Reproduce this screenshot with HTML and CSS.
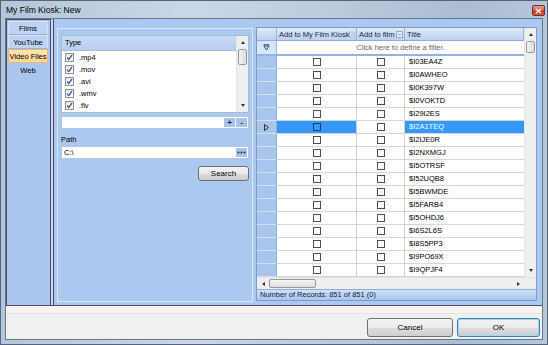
FILE: index.html
```html
<!DOCTYPE html>
<html>
<head>
  <link rel="stylesheet" href="styles.css">
</head>
<body>
<div class="window">
  <div class="titlebar">
    <span class="title">My Film Kiosk: New</span>
    <span class="close"><svg width="7" height="6" viewBox="0 0 7 6"><path d="M1 1 L6 5 M6 1 L1 5" stroke="#fff" stroke-width="1.4"/></svg></span>
  </div>

  <div class="client">
    <div class="main">
      <div class="tabs">
        <div class="tab">Films</div>
        <div class="tab">YouTube</div>
        <div class="tab active">Video Files</div>
        <div class="tab flat">Web</div>
      </div>
      <div class="splitter"></div>

      <div class="middle">
        <div class="group">
          <div class="typelist">
            <div class="tl-main">
              <div class="tl-head">Type</div>
              <div class="tl-item"><span class="cb"><svg width="7" height="7" viewBox="0 0 7 7"><path d="M1 3.6 L2.8 5.6 L6 1" fill="none" stroke="#23459c" stroke-width="1.2"/></svg></span>.mp4</div>
              <div class="tl-item"><span class="cb"><svg width="7" height="7" viewBox="0 0 7 7"><path d="M1 3.6 L2.8 5.6 L6 1" fill="none" stroke="#23459c" stroke-width="1.2"/></svg></span>.mov</div>
              <div class="tl-item"><span class="cb"><svg width="7" height="7" viewBox="0 0 7 7"><path d="M1 3.6 L2.8 5.6 L6 1" fill="none" stroke="#23459c" stroke-width="1.2"/></svg></span>.avi</div>
              <div class="tl-item"><span class="cb"><svg width="7" height="7" viewBox="0 0 7 7"><path d="M1 3.6 L2.8 5.6 L6 1" fill="none" stroke="#23459c" stroke-width="1.2"/></svg></span>.wmv</div>
              <div class="tl-item"><span class="cb"><svg width="7" height="7" viewBox="0 0 7 7"><path d="M1 3.6 L2.8 5.6 L6 1" fill="none" stroke="#23459c" stroke-width="1.2"/></svg></span>.flv</div>
            </div>
            <div class="vscroll">
              <div class="arrow up"></div>
              <div class="thumb list-thumb"></div>
              <div class="track"></div>
              <div class="arrow down"></div>
            </div>
          </div>

          <div class="addrow">
            <div class="textbox"></div>
            <div class="sqbtn">+</div>
            <div class="sqbtn">-</div>
          </div>

          <div class="label">Path</div>
          <div class="pathrow">
            <div class="textbox">C:\</div>
            <div class="sqbtn"><svg width="9" height="3" viewBox="0 0 9 3"><circle cx="1.5" cy="1.5" r="1" fill="#1c3560"/><circle cx="4.5" cy="1.5" r="1" fill="#1c3560"/><circle cx="7.5" cy="1.5" r="1" fill="#1c3560"/></svg></div>
          </div>

          <div class="search">Search</div>
        </div>
      </div>

      <div class="gridpane">
        <div class="grid">
          <div class="gbody">
            <div class="table">
              <div class="ghead">
                <div class="hc"></div>
                <div class="hc">Add to My Film Kiosk<svg width="7" height="7" viewBox="0 0 7 7"><rect x=".5" y=".5" width="6" height="6" fill="#e6eefa" stroke="#93acd3"/><path d="M2 2.8 L3.5 4.3 L5 2.8" stroke="#7d92b3" fill="none"/></svg></div>
                <div class="hc">Add to film<svg width="7" height="7" viewBox="0 0 7 7"><rect x=".5" y=".5" width="6" height="6" fill="#e6eefa" stroke="#93acd3"/><path d="M2 2.8 L3.5 4.3 L5 2.8" stroke="#7d92b3" fill="none"/></svg></div>
                <div class="hc">Title</div>
              </div>
              <div class="gfilter">
                <div class="frh"><svg width="7" height="7" viewBox="0 0 7 7"><path d="M0.5 0.8 H6.5 M1 2 L3.5 6 L6 2 Z" fill="none" stroke="#1f3d6b" stroke-width="0.9"/></svg></div>
                <div class="ftext">Click here to define a filter.</div>
              </div>
              <div class="grow"><div class="rh"></div><div class="c"><span class="gcb"></span></div><div class="c"><span class="gcb"></span></div><div class="t">$I03EA4Z</div></div>
              <div class="grow"><div class="rh"></div><div class="c"><span class="gcb"></span></div><div class="c"><span class="gcb"></span></div><div class="t">$I0AWHEO</div></div>
              <div class="grow"><div class="rh"></div><div class="c"><span class="gcb"></span></div><div class="c"><span class="gcb"></span></div><div class="t">$I0K397W</div></div>
              <div class="grow"><div class="rh"></div><div class="c"><span class="gcb"></span></div><div class="c"><span class="gcb"></span></div><div class="t">$I0VOKTD</div></div>
              <div class="grow"><div class="rh"></div><div class="c"><span class="gcb"></span></div><div class="c"><span class="gcb"></span></div><div class="t">$I29I2ES</div></div>
              <div class="grow sel"><div class="rh"><svg width="5" height="7" viewBox="0 0 5 7"><path d="M0.5 0.5 L4.5 3.5 L0.5 6.5 Z" fill="none" stroke="#222" stroke-width="0.9"/></svg></div><div class="c c1"><span class="gcb"></span></div><div class="c"><span class="gcb"></span></div><div class="t">$I2A1TEQ</div></div>
              <div class="grow"><div class="rh"></div><div class="c"><span class="gcb"></span></div><div class="c"><span class="gcb"></span></div><div class="t">$I2IJE0R</div></div>
              <div class="grow"><div class="rh"></div><div class="c"><span class="gcb"></span></div><div class="c"><span class="gcb"></span></div><div class="t">$I2NXMGJ</div></div>
              <div class="grow"><div class="rh"></div><div class="c"><span class="gcb"></span></div><div class="c"><span class="gcb"></span></div><div class="t">$I5OTRSF</div></div>
              <div class="grow"><div class="rh"></div><div class="c"><span class="gcb"></span></div><div class="c"><span class="gcb"></span></div><div class="t">$I52UQB8</div></div>
              <div class="grow"><div class="rh"></div><div class="c"><span class="gcb"></span></div><div class="c"><span class="gcb"></span></div><div class="t">$I5BWMDE</div></div>
              <div class="grow"><div class="rh"></div><div class="c"><span class="gcb"></span></div><div class="c"><span class="gcb"></span></div><div class="t">$I5FARB4</div></div>
              <div class="grow"><div class="rh"></div><div class="c"><span class="gcb"></span></div><div class="c"><span class="gcb"></span></div><div class="t">$I5OHDJ6</div></div>
              <div class="grow"><div class="rh"></div><div class="c"><span class="gcb"></span></div><div class="c"><span class="gcb"></span></div><div class="t">$I6S2L6S</div></div>
              <div class="grow"><div class="rh"></div><div class="c"><span class="gcb"></span></div><div class="c"><span class="gcb"></span></div><div class="t">$I8S5PP3</div></div>
              <div class="grow"><div class="rh"></div><div class="c"><span class="gcb"></span></div><div class="c"><span class="gcb"></span></div><div class="t">$I9PO69X</div></div>
              <div class="grow"><div class="rh"></div><div class="c"><span class="gcb"></span></div><div class="c"><span class="gcb"></span></div><div class="t">$I9QPJF4</div></div>
            </div>
            <div class="vscroll">
              <div class="arrow up"></div>
              <div class="thumb grid-thumb"></div>
              <div class="track"></div>
              <div class="arrow down"></div>
            </div>
          </div>
          <div class="hscroll">
            <div class="harrow left"></div>
            <div class="hthumb"></div>
            <div class="htrack"></div>
            <div class="harrow right"></div>
            <div class="corner"></div>
          </div>
          <div class="status">Number of Records: 851 of 851 (0)</div>
        </div>
      </div>
    </div>

    <div class="footer">
      <div class="btn">Cancel</div>
      <div class="btn ok">OK</div>
    </div>
  </div>
</div>
</body>
</html>
```

FILE: styles.css
```css
* {
  box-sizing: border-box;
}
body {
  margin: 0;
  width: 548px;
  height: 345px;
  overflow: hidden;
  font-family: "Liberation Sans", Arial, sans-serif;
  font-size: 7.5px;
  color: #000;
}
.window {
  width: 548px;
  height: 345px;
  border: 1px solid #56657a;
  background: linear-gradient(to right, #b4c6da, #c9d7e7 35%, #bccbdd 60%, #aabdd3 85%, #b6c7da);
  display: flex;
  flex-direction: column;
}
.titlebar {
  height: 17px;
  display: flex;
  justify-content: space-between;
  padding: 0 2px 0 5px;
}
.title {
  font-size: 8.5px;
  line-height: 18px;
}
.close {
  width: 13px;
  height: 11px;
  margin-top: 4px;
  border: 1px solid #7a2a22;
  border-radius: 2px;
  background: linear-gradient(#eba195, #d45a45 50%, #c1301c 51%, #d9623f);
  display: flex;
  align-items: center;
  justify-content: center;
}
.client {
  flex: 1;
  margin: 0 4px 4px 4px;
  border: 1px solid #6b7787;
  background: #f0f0f0;
  display: flex;
  flex-direction: column;
}
.main {
  height: 287px;
  display: flex;
  border-bottom: 1px solid #4b4a73;
}

/* left tabs */
.tabs {
  width: 45px;
  background: #a9c6ec;
  border: 1px solid #4b4a73;
  border-bottom: none;
  padding: 1px 2px 0 1px;
}
.tab {
  height: 14px;
  line-height: 13px;
  text-align: center;
  background: #bcd3f3;
  border: 1px solid #d3e2f7;
  border-bottom-color: #97b4df;
}
.tab.active {
  background: linear-gradient(#fde3b4, #fbd597);
  border-color: #e9b971;
}
.tab.flat {
  background: none;
  border-color: transparent;
}
.splitter {
  width: 2px;
  background: #d0d8e6;
}
.middle {
  width: 203px;
  background: #abc8ee;
  border-left: 1px solid #4b4a73;
  padding: 9px 3px 3px 3px;
}
.group {
  height: 100%;
  border: 1px solid #dbe7f8;
  padding: 6px 3px 0 3px;
  display: flex;
  flex-direction: column;
}

/* type list */
.typelist {
  height: 78px;
  display: flex;
  border: 1px solid #9fb9df;
  background: #fff;
}
.tl-main {
  flex: 1;
}
.tl-head {
  height: 15px;
  line-height: 14px;
  padding-left: 3px;
  background: linear-gradient(#c9dcf6, #b7cff1);
  border-bottom: 1px solid #a3bde3;
}
.tl-item {
  height: 12px;
  display: flex;
  align-items: center;
  padding-left: 3px;
}
.cb {
  width: 9px;
  height: 9px;
  margin-right: 5px;
  border: 1px solid #8e8f8f;
  background: linear-gradient(#e6e6e6, #fdfdfd);
  display: flex;
  align-items: center;
  justify-content: center;
}
.vscroll {
  width: 12px;
  background: #efefef;
  border-left: 1px solid #e4e4e4;
  display: flex;
  flex-direction: column;
}
.arrow {
  height: 13px;
  display: flex;
  align-items: center;
  justify-content: center;
}
.arrow::after {
  content: "";
  border-left: 2.5px solid transparent;
  border-right: 2.5px solid transparent;
}
.arrow.up::after {
  border-bottom: 3px solid #333;
}
.arrow.down::after {
  border-top: 3px solid #333;
}
.thumb {
  margin: 0 1px;
  border: 1px solid #9a9a9a;
  border-radius: 2px;
  background: linear-gradient(to right, #f4f4f4, #dcdcdc);
}
.list-thumb {
  height: 16px;
}
.grid-thumb {
  height: 12px;
}
.track {
  flex: 1;
}

.addrow, .pathrow {
  height: 13px;
  display: flex;
  gap: 1px;
  padding: 1px;
  background: #fff;
  border: 1px solid #b4c8e6;
}
.addrow {
  margin-top: 3px;
}
.textbox {
  flex: 1;
  padding-left: 1px;
  line-height: 9px;
}
.sqbtn {
  width: 11px;
  background: #a6c3eb;
  color: #1a2c48;
  font-size: 8px;
  font-weight: bold;
  text-align: center;
  line-height: 9px;
  display: flex;
  align-items: center;
  justify-content: center;
}
.label {
  margin-top: 4px;
  height: 13px;
  line-height: 13px;
}
.search {
  align-self: flex-end;
  margin-top: 7px;
  width: 51px;
  height: 15px;
  line-height: 13px;
  text-align: center;
  font-size: 8px;
  border: 1px solid #707070;
  border-radius: 3px;
  background: linear-gradient(#f3f3f3, #ebebeb 50%, #dddddd 51%, #cfcfcf);
}

/* grid */
.gridpane {
  flex: 1;
  background: #abc8ee;
  padding: 8px 5px 4px 0;
}
.grid {
  height: 274px;
  border: 1px solid #7a9ccb;
  background: #fff;
  display: flex;
  flex-direction: column;
}
.gbody {
  height: 249px;
  display: flex;
}
.table {
  width: 267px;
}
.ghead, .grow {
  display: grid;
  grid-template-columns: 20px 80px 48px 119px;
  height: 13px;
}
.ghead {
  background: linear-gradient(#dfeafa, #bad1f0);
  border-bottom: 1px solid #8eaedb;
  color: #102a4c;
}
.hc {
  border-right: 1px solid #9ab6dd;
  padding: 0 1px 0 2px;
  display: flex;
  align-items: center;
  justify-content: space-between;
  white-space: nowrap;
}
.gfilter {
  height: 15px;
  display: flex;
  border-bottom: 2px solid #91b3e5;
}
.frh {
  width: 20px;
  background: #d7e5f8;
  border-right: 1px solid #9ab6dd;
  display: flex;
  align-items: center;
  justify-content: center;
}
.ftext {
  flex: 1;
  text-align: center;
  color: #6a6a6a;
  line-height: 13px;
}
.rh {
  background: #a9c5ec;
  border-right: 1px solid #8eaedb;
  border-bottom: 1px solid #d0e0f6;
  display: flex;
  align-items: center;
  justify-content: center;
}
.c {
  border-right: 1px solid #d0d0d0;
  border-bottom: 1px solid #d6d6d6;
  display: flex;
  align-items: center;
  justify-content: center;
}
.gcb {
  width: 8px;
  height: 8px;
  border: 1px solid #505050;
  background: #fff;
}
.t {
  border-bottom: 1px solid #d6d6d6;
  padding-left: 4px;
  line-height: 12px;
}
.sel .c1, .sel .t {
  background: #3399ff;
  color: #fff;
}
.sel .c1 .gcb {
  background: transparent;
  border-color: #1d3b66;
}
.hscroll {
  height: 12px;
  display: flex;
  background: #efefef;
  border-top: 1px solid #e2e2e2;
}
.harrow {
  width: 12px;
  display: flex;
  align-items: center;
  justify-content: center;
}
.harrow::after {
  content: "";
  border-top: 2.5px solid transparent;
  border-bottom: 2.5px solid transparent;
}
.harrow.left::after {
  border-right: 3px solid #333;
}
.harrow.right::after {
  border-left: 3px solid #333;
}
.hthumb {
  width: 47px;
  margin: 1px 0;
  border: 1px solid #9a9a9a;
  border-radius: 2px;
  background: linear-gradient(#f4f4f4, #dcdcdc);
}
.htrack {
  flex: 1;
}
.corner {
  width: 12px;
  background: #efefef;
}
.status {
  height: 11px;
  line-height: 10px;
  padding-left: 3px;
  background: linear-gradient(#cfe0f7, #a9c6ee);
  border-top: 1px solid #8eaedb;
  color: #0c1e3a;
}

/* footer */
.footer {
  flex: 1;
  display: flex;
  justify-content: flex-end;
  gap: 4px;
  padding: 12px 2px 0 0;
  background: linear-gradient(#f7f4f0 0, #f7f4f0 7px, #e3e3e3 7px, #e3e3e3 8px, #f0f0f0 8px);
}
.btn {
  width: 86px;
  height: 19px;
  line-height: 17px;
  text-align: center;
  font-size: 8px;
  border: 1px solid #707070;
  border-radius: 3px;
  background: linear-gradient(#f3f3f3, #ebebeb 50%, #dddddd 51%, #cfcfcf);
}
.btn.ok {
  width: 83px;
  border-color: #3c7fb1;
  box-shadow: inset 0 0 0 1px #9fd9f8;
}
```
